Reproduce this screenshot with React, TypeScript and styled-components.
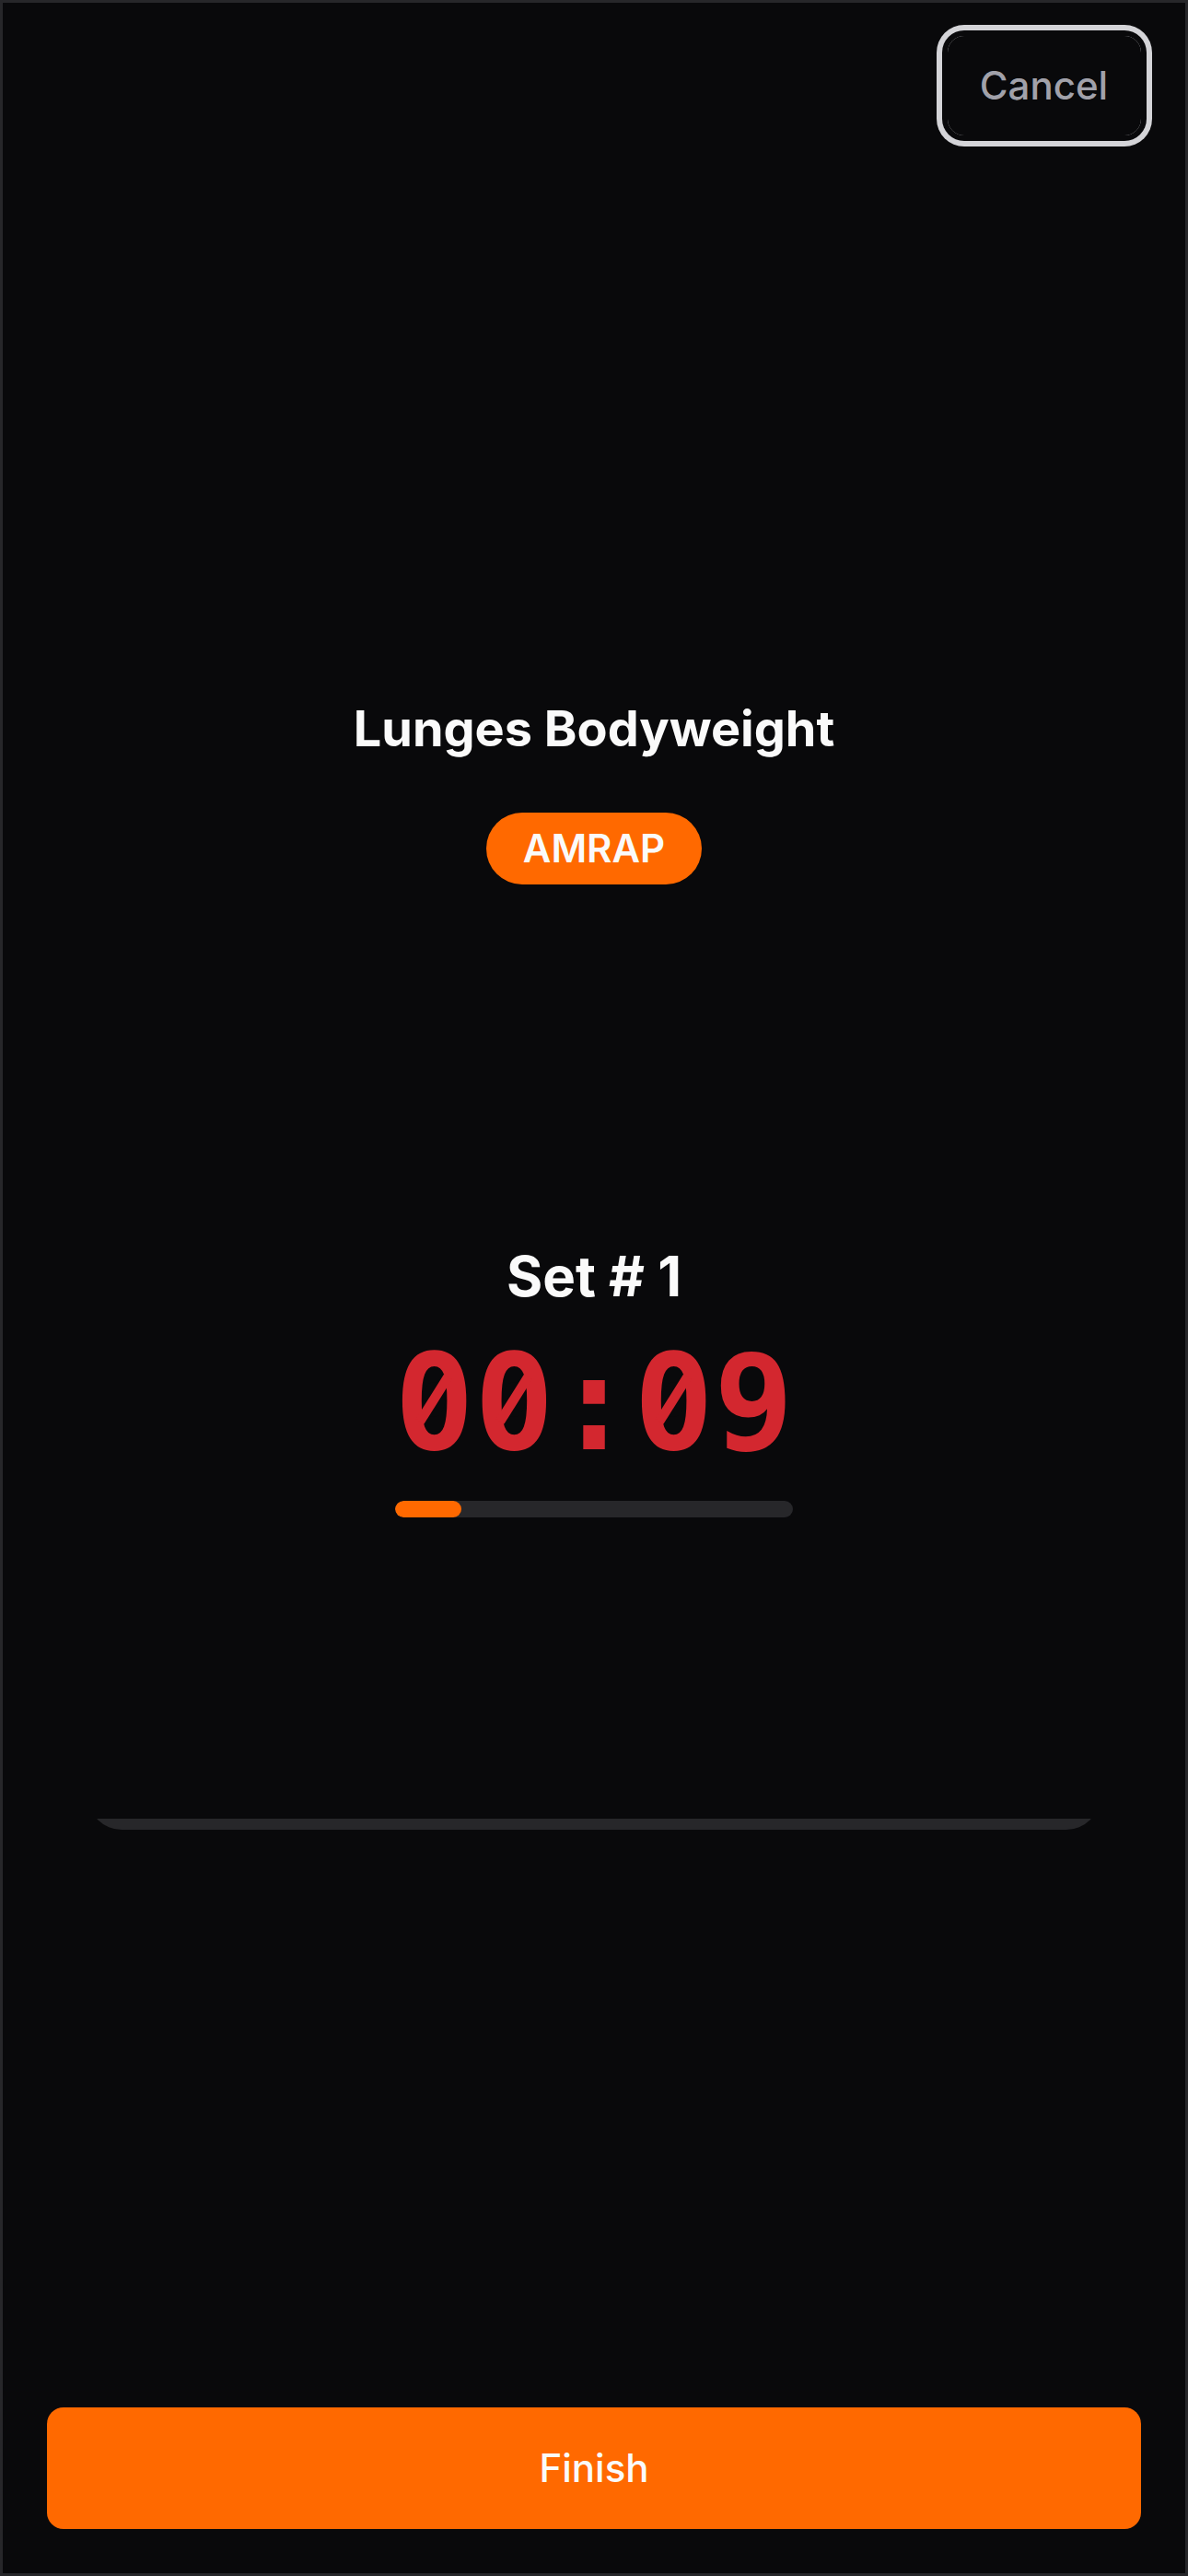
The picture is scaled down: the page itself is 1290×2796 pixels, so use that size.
import React from "react";
import styled, { createGlobalStyle } from "styled-components";

interface IProgressFillProps {
  $percent: number;
}

interface ITimerDigitProps {
  value: string;
}

const elapsedSeconds = 9;
const totalSeconds = 54;

const formatTime = (seconds: number) => {
  const minutes = Math.floor(seconds / 60);
  return [minutes, seconds % 60]
    .map((value) => String(value).padStart(2, "0"))
    .join(":");
};

const TimerDigit = ({ value }: ITimerDigitProps) => {
  if (value !== "0") {
    return <Digit>{value}</Digit>;
  }
  // slashed zero: hide the dot in the middle, then draw the stroke
  return (
    <Digit>
      {value}
      <ZeroSlash viewBox="0 0 87 144" aria-hidden="true">
        <ellipse cx="43.2" cy="68" rx="12" ry="19" fill="#09090b" />
        <line
          x1="28.1"
          y1="91.8"
          x2="58.4"
          y2="43.6"
          stroke="currentColor"
          strokeWidth="10.4"
        />
      </ZeroSlash>
    </Digit>
  );
};

const App = () => {
  return (
    <>
      <GlobalStyle />
      <Screen>
        <Header>
          <CancelButton type="button">Cancel</CancelButton>
        </Header>
        <Exercise>
          <ExerciseName>Lunges Bodyweight</ExerciseName>
          <Badge>AMRAP</Badge>
        </Exercise>
        <SetSection>
          <SetTitle>Set # 1</SetTitle>
          <Timer>
            {formatTime(elapsedSeconds)
              .split("")
              .map((char, index) => (
                <TimerDigit key={index} value={char} />
              ))}
          </Timer>
          <ProgressTrack>
            <ProgressFill $percent={(elapsedSeconds / totalSeconds) * 100} />
          </ProgressTrack>
        </SetSection>
        <Drawer>
          <DrawerPanel />
        </Drawer>
        <Footer>
          <FinishButton type="button">Finish</FinishButton>
        </Footer>
      </Screen>
    </>
  );
};

export default App;

const GlobalStyle = createGlobalStyle`
  * {
    box-sizing: border-box;
  }
  body {
    margin: 0;
    background-color: #09090b;
    font-family: Inter, "Liberation Sans", sans-serif;
    -webkit-font-smoothing: antialiased;
  }
  h1, h2, p {
    margin: 0;
  }
  button {
    border: 0;
    font-family: inherit;
  }
`;

const Screen = styled.main`
  display: flex;
  flex-direction: column;
  width: 1290px;
  height: 2796px;
  border: 3px solid #27272a;
  background-color: #09090b;
  color: #fafafa;
`;

const Header = styled.header`
  display: flex;
  justify-content: flex-end;
  padding: 36px 48px 0;
`;

const CancelButton = styled.button`
  width: 210px;
  height: 108px;
  padding: 0 1px 0 0;
  border-radius: 18px;
  background-color: transparent;
  box-shadow: 0 0 0 6px #09090b, 0 0 0 12px #d4d4d8;
  color: #a1a1aa;
  font-size: 42px;
  font-weight: 500;
  line-height: 60px;
`;

const Exercise = styled.section`
  display: flex;
  flex-direction: column;
  align-items: center;
  gap: 49px;
  margin-top: 602px;
`;

const ExerciseName = styled.h1`
  font-size: 54px;
  font-weight: 700;
  line-height: 84px;
`;

const Badge = styled.span`
  width: 234px;
  padding: 9px 0;
  border-radius: 39px;
  background-color: #ff6900;
  font-size: 42px;
  font-weight: 600;
  line-height: 60px;
  text-align: center;
`;

const SetSection = styled.section`
  display: flex;
  flex-direction: column;
  align-items: center;
  margin-top: 383px;
`;

const SetTitle = styled.h2`
  font-size: 60px;
  font-weight: 700;
  line-height: 84px;
`;

const Timer = styled.p`
  display: flex;
  margin-top: 24px;
  color: #d3272f;
  font-family: "DejaVu Sans Mono", "Liberation Mono", monospace;
  font-size: 144px;
  font-weight: 700;
  line-height: 144px;
`;

const Digit = styled.span`
  position: relative;
`;

const ZeroSlash = styled.svg`
  position: absolute;
  top: 0;
  left: 0;
  width: 87px;
  height: 144px;
`;

const ProgressTrack = styled.div`
  width: 432px;
  height: 18px;
  margin-top: 34px;
  border-radius: 9px;
  background-color: #27272a;
  overflow: hidden;
`;

const ProgressFill = styled.div<IProgressFillProps>`
  width: ${(props) => props.$percent}%;
  height: 100%;
  border-radius: 9px;
  background-color: #ff6900;
`;

const Drawer = styled.div`
  display: flex;
  align-items: flex-end;
  height: 12px;
  margin: 327px 93px 0;
  overflow: hidden;
`;

const DrawerPanel = styled.div`
  flex: 1;
  height: 72px;
  border-radius: 36px;
  background-color: #27272a;
`;

const Footer = styled.footer`
  margin-top: auto;
  padding: 0 48px 48px;
`;

const FinishButton = styled.button`
  width: 100%;
  height: 132px;
  border-radius: 18px;
  background-color: #ff6900;
  color: #fafafa;
  font-size: 42px;
  font-weight: 500;
  line-height: 60px;
`;
